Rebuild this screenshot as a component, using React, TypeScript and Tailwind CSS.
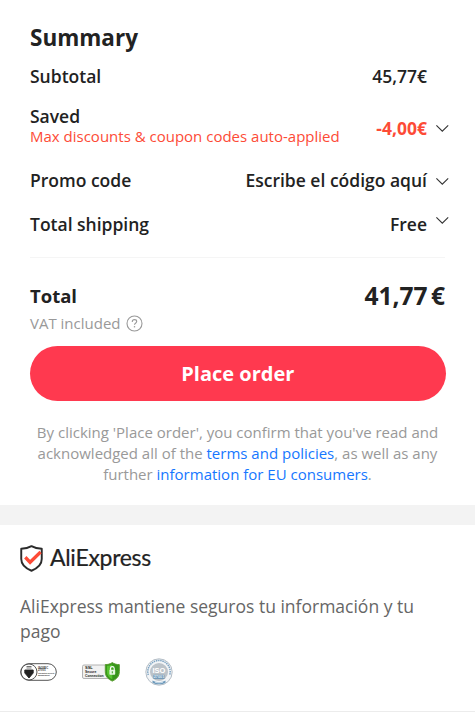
import React from 'react';

const Chevron: React.FC<{ className?: string }> = ({ className = '' }) => (
  <svg className={`-mr-[5px] ml-2 h-[9px] w-[15px] shrink-0 ${className}`} viewBox="0 0 15 9" fill="none" stroke="#333" strokeWidth="1.1">
    <path d="M1.400 1.400 7.300 7.200 13.200 1.400" />
  </svg>
);

const QuestionIcon = () => (
  <svg className="ml-[5px] h-[17px] w-[17px]" viewBox="0 0 17 17" fill="none" stroke="#999" strokeWidth="1.1">
    <circle cx="8.5" cy="8.5" r="7.5" />
    <path d="M6.3 7V6.600C6.300 5.300 7.200 4.600 8.500 4.600s2.200.7 2.200 1.900c0 1.700-2.200 1.700-2.200 3.300" />
    <path d="M8.5 11.100v1.300" strokeWidth="1.3" />
  </svg>
);

const ShieldLogo = () => (
  <svg className="h-[27px] w-[23px]" viewBox="0 0 24 27" preserveAspectRatio="none" fill="none">
    <path
      d="M12 1.200C8.800 3 5.200 3.700 1.300 3.800V14c0 5.600 4.200 9.200 10.700 11.700 6.500-2.500 10.700-6.100 10.700-11.700V3.800C18.800 3.700 15.200 3 12 1.200Z"
      stroke="#2b2b2b"
      strokeWidth="2"
      strokeLinejoin="round"
    />
    <path d="m5.500 12.200 5 5.100 11-10.400" stroke="#fd4b36" strokeWidth="3.400" />
  </svg>
);

const CertificateBadge = () => (
  <svg className="h-[18px] w-[37px]" viewBox="0 0 37 18">
    <rect x=".7" y=".7" width="35.600" height="16.600" rx="8.300" fill="#fff" stroke="#555" />
    <circle cx="9" cy="9" r="8" fill="#fff" stroke="#555" />
    <path d="M6.500 3.800h5M4.800 7h8.400v3L9 15 4.800 10Z" fill="#222" stroke="#222" strokeWidth=".9" />
    <path d="M6.500 5.300h5" stroke="#777" strokeWidth=".6" />
    <g fill="#333" fontFamily="Liberation Sans, sans-serif" fontSize="2.800" fontWeight="700">
      <text x="18" y="5.500">ISO/IEC</text>
      <text x="18" y="8.300">27001</text>
      <text x="18" y="11" fontSize="1.700">Information Security</text>
      <text x="18" y="13.400" fontSize="1.900">Management</text>
    </g>
  </svg>
);

const SslBadge = () => (
  <svg className="h-5 w-[39px]" viewBox="0 0 39 20">
    <rect x=".5" y="3" width="31" height="13.500" rx="1.500" fill="#f1f1f1" stroke="#aaa" strokeWidth=".9" />
    <g fill="#222" fontFamily="Liberation Sans, sans-serif" fontSize="4" fontWeight="700">
      <text x="3" y="7.300">SSL</text>
      <text x="3" y="10.900" fontSize="3.400">Secure</text>
      <text x="3" y="14.500" fontSize="3.400">Connection</text>
    </g>
    <path d="M30.300.6c-2.200 1.600-4.600 2-7 2v7c0 4.900 2.700 7.500 7 9.500 4.300-2 7-4.600 7-9.500v-7c-2.400 0-4.800-.4-7-2Z" fill="#36951a" stroke="#5b9d32" />
    <path d="M30.300 2.200c-1.700 1-3.500 1.500-5.400 1.600v5.900c0 3.800 2 5.900 5.400 7.600Z" fill="#58c331" />
    <path d="M28.400 8V6.500a1.900 1.900 0 0 1 3.800 0V8" fill="none" stroke="#fff" strokeWidth="1.100" />
    <rect x="27.400" y="7.800" width="5.800" height="5" rx=".7" fill="#e4f6df" />
    <path d="M30.300 9.300v2" stroke="#369f20" />
  </svg>
);

const IsoBadge = () => (
  <svg className="h-7 w-7" viewBox="0 0 28 28">
    <circle cx="14" cy="14" r="13.200" fill="#f3f5f7" stroke="#a3afb9" strokeWidth=".8" />
    <path d="M3.300 17a11.200 11.200 0 1 1 21.400 0" fill="none" stroke="#7fa5c3" strokeWidth="1.500" strokeDasharray="1.500 .7" />
    <circle cx="14" cy="14" r="9" fill="#bcc3c9" />
    <text x="14" y="15.300" textAnchor="middle" fill="#fff" fontFamily="Liberation Sans, sans-serif" fontSize="7.500" fontWeight="700">
      ISO
    </text>
    <rect x="8.500" y="16.800" width="11" height="4" fill="#6792b4" />
    <text x="14" y="20.200" textAnchor="middle" fill="#e8f1f8" fontFamily="Liberation Sans, sans-serif" fontSize="3.800" fontWeight="700">
      27001
    </text>
    <path d="M7.500 22.500c4 2.300 9 2.300 13 0v2.300c-4 2-9 2-13 0Z" fill="#6e9abb" />
    <path d="M10 24.200c2.600.8 5.400.8 8 0" fill="none" stroke="#eef5fa" strokeWidth=".7" />
  </svg>
);

const App: React.FC = () => {
  return (
    <main className="flex h-[712px] w-[475px] flex-col overflow-hidden border-b border-[#ececec] bg-white font-['Open_Sans',sans-serif] text-[#222]">
      <section className="h-[505px] px-[30px] pt-[21px]">
        <h1 className="text-[22.5px] leading-[33px] font-bold">Summary</h1>
        <div className="mt-[10px] flex h-6 items-center justify-between pr-[18px] text-[17.5px] leading-6 font-semibold">
          <span>Subtotal</span>
          <span>45,77€</span>
        </div>
        <div className="mt-[18px] flex h-10 items-center">
          <div className="mr-auto">
            <p className="text-[17.5px] leading-5 font-semibold">Saved</p>
            <p className="text-[15px] leading-5 text-[#fd4b36]">Max discounts &amp; coupon codes auto-applied</p>
          </div>
          <span className="mt-[3px] text-[17.5px] leading-6 font-bold text-[#fd4b36]">-4,00€</span>
          <Chevron className="mt-1" />
        </div>
        <div className="mt-[22px] flex h-6 items-center text-[17.5px] leading-6 font-semibold">
          <span className="mr-auto">Promo code</span>
          <span>Escribe el código aquí</span>
          <Chevron className="mt-0.5" />
        </div>
        <div className="mt-5 flex h-6 items-center text-[17.5px] leading-6 font-semibold">
          <span className="mr-auto">Total shipping</span>
          <span>Free</span>
          <Chevron className="mb-[7px]" />
        </div>
        <hr className="mt-[21px] border-[#f5f5f5]" />
        <div className="mt-6 flex h-7 items-center justify-between font-bold">
          <span className="text-[18.5px] leading-7">Total</span>
          <span className="text-[24.5px] leading-7">41,77<span className="ml-[3.5px]">€</span></span>
        </div>
        <div className="mt-px flex h-6 items-center text-[15px] leading-6 text-[#999]">
          VAT included
          <QuestionIcon />
        </div>
        <button className="mt-[10.5px] h-[55px] w-[415.5px] rounded-full bg-[#ff394f] pt-px text-[20px] leading-7 font-bold text-white">Place order</button>
        <p className="mt-[21px] text-center text-[15px] leading-[21.3px] whitespace-nowrap text-[#999]">
          By clicking 'Place order', you confirm that you've read and
          <br />
          acknowledged all of the <a className="text-[#1677ff]">terms and policies</a>, as well as any
          <br />
          further <a className="text-[#1677ff]">information for EU consumers</a>.
        </p>
      </section>
      <div className="h-5 shrink-0 bg-[#f3f3f3]" />
      <section className="px-5 pt-[19px]">
        <div className="flex h-7 items-center">
          <ShieldLogo />
          <span className="-mt-0.5 ml-[7px] font-['Lato',sans-serif] text-[23px] leading-7 tracking-[-0.3px] [-webkit-text-stroke:0.2px_#222]">AliExpress</span>
        </div>
        <p className="mt-[22px] text-[17.5px] leading-[25px] whitespace-nowrap text-[#666]">
          AliExpress mantiene seguros tu información y tu
          <br />
          pago
        </p>
        <div className="mt-3.5 flex h-7 items-center">
          <CertificateBadge />
          <span className="ml-[25px] flex"><SslBadge /></span>
          <span className="ml-6 flex"><IsoBadge /></span>
        </div>
      </section>
    </main>
  );
};

export default App;
